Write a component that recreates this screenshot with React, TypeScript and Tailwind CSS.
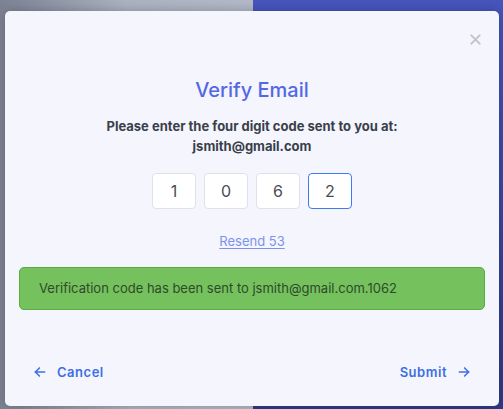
import { useState } from "react";

function ArrowLeft() {
  return (
    <svg width="14" height="14" viewBox="0 0 24 24" fill="none" stroke="currentColor" strokeWidth="2.6" strokeLinecap="round" strokeLinejoin="round">
      <path d="M20 12H4" />
      <path d="M11 5l-7 7 7 7" />
    </svg>
  );
}

function ArrowRight() {
  return (
    <svg width="14" height="14" viewBox="0 0 24 24" fill="none" stroke="currentColor" strokeWidth="2.6" strokeLinecap="round" strokeLinejoin="round">
      <path d="M4 12h16" />
      <path d="M13 5l7 7-7 7" />
    </svg>
  );
}

export default function App() {
  const [code] = useState(["1", "0", "6", "2"]);

  return (
    <div className="relative h-[409px] w-[503px] overflow-hidden font-['Inter',sans-serif]">
      {/* page behind the backdrop */}
      <div className="flex h-full">
        <div className="w-[253px] bg-gradient-to-r from-[#7d8394] via-[#adb3c3] to-[#b4bac9]" />
        <div className="flex flex-1 flex-col bg-[#4352b8]">
          <div className="flex-1 bg-gradient-to-b from-[#4756bd] to-[#2f3a86]" />
        </div>
      </div>

      {/* modal */}
      <div className="absolute top-[11px] left-[5px] flex h-[395px] w-[494px] flex-col rounded-[5px] bg-[#f4f5fd] shadow-[0_0_12px_rgba(0,0,0,0.25)]">
        <div className="flex justify-end pt-[23px] pr-[18px]">
          <button className="text-[#c3c4ca]">
            <svg width="11" height="11" viewBox="0 0 12 12" stroke="currentColor" strokeWidth="2.2" strokeLinecap="round">
              <path d="M1.5 1.5l9 9M10.5 1.5l-9 9" />
            </svg>
          </button>
        </div>

        <h1 className="mt-[31px] text-center text-[20px] leading-[28px] font-medium text-[#5468e6]">
          Verify Email
        </h1>

        <p className="mt-[12px] text-center text-[13px] leading-[20px] font-bold text-[#3a3f4b]">
          Please enter the four digit code sent to you at:
          <br />
          jsmith@gmail.com
        </p>

        <div className="mt-[17px] flex justify-center gap-[8px]">
          {code.map((d, i) => (
            <div
              key={i}
              className={`flex h-[36px] w-[44px] items-center justify-center rounded-[4px] border bg-white text-[16px] text-[#484c55] ${i === 3 ? "border-[#3f7bf0]" : "border-[#dfe1ee]"}`}
            >
              {d}
            </div>
          ))}
        </div>

        <div className="mt-[23px] text-center text-[13px] leading-[18px]">
          <a className="text-[#7b93ef] underline underline-offset-2">Resend 53</a>
        </div>

        <div className="mx-[14px] mt-[17px] flex h-[43px] items-center rounded-[5px] border border-[#58ae3f] bg-[#75c15d] px-[19px] text-[13px] text-[#2f4a2a]">
          Verification code has been sent to jsmith@gmail.com.1062
        </div>

        <div className="mt-auto mb-[24px] flex items-center justify-between px-[28px] text-[13px] font-semibold tracking-[0.04em] text-[#3d6fe2]">
          <button className="flex items-center gap-[10px]">
            <ArrowLeft />
            Cancel
          </button>
          <button className="flex items-center gap-[10px]">
            Submit
            <ArrowRight />
          </button>
        </div>
      </div>
    </div>
  );
}
